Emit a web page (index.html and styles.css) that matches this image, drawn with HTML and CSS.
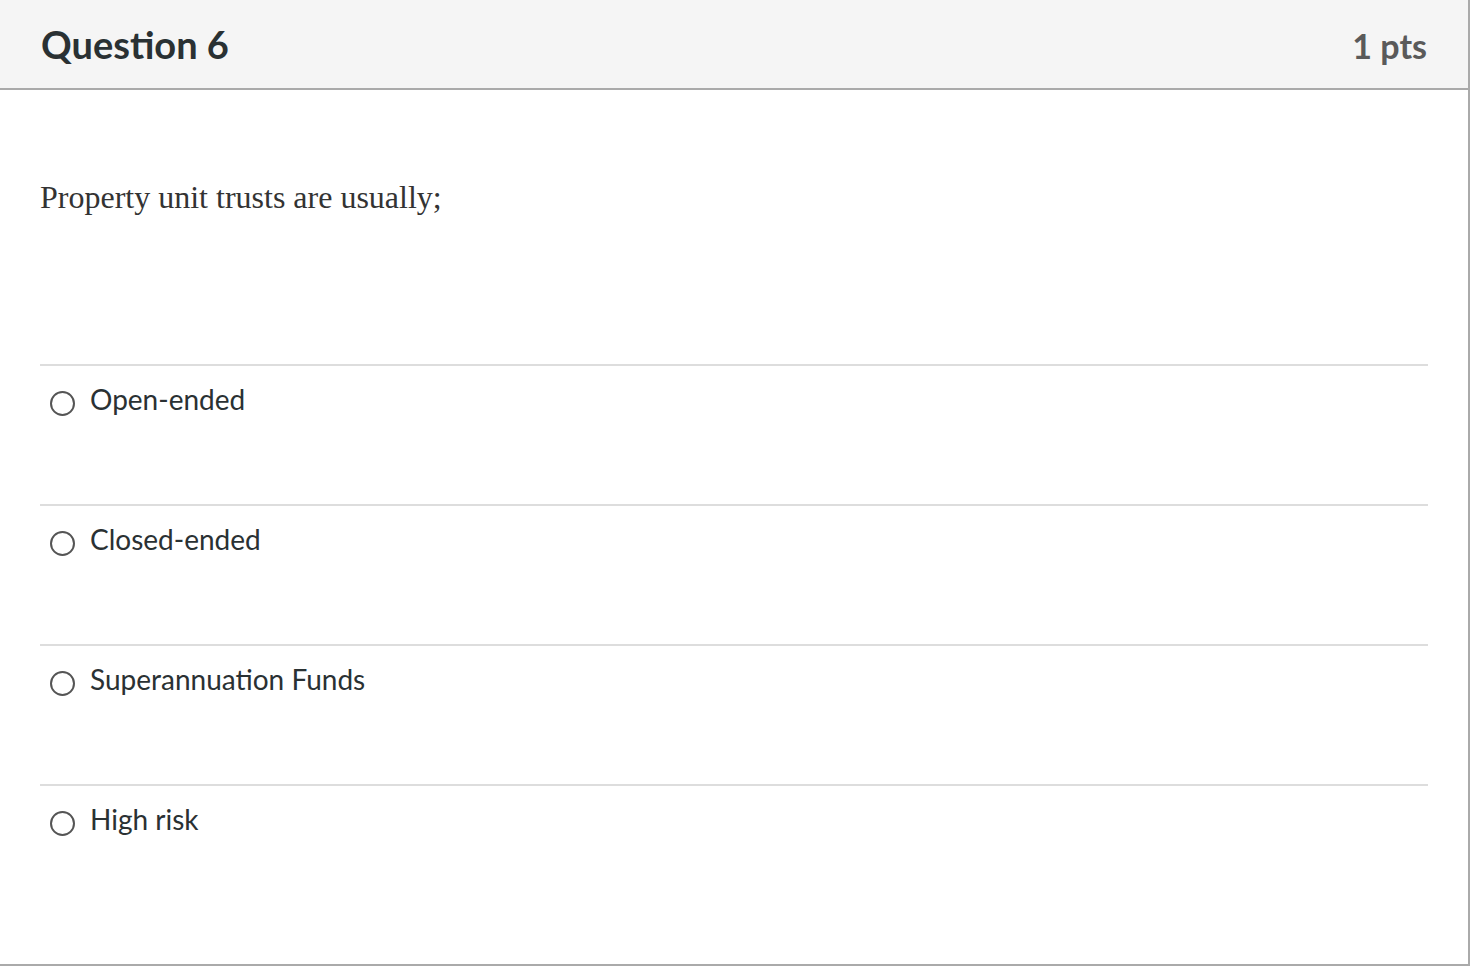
FILE: index.html
```html
<!DOCTYPE html>
<html lang="en">
<head>
<meta charset="utf-8">
<title>Question 6</title>
<link rel="stylesheet" href="styles.css">
</head>
<body>
<div class="card">
  <div class="header">
    <span class="title">Question 6</span>
    <span class="points">1 pts</span>
  </div>
  <div class="content">
    <p class="question-text">Property unit trusts are usually;</p>
    <div class="answers">
      <label class="answer"><span class="radio"></span><span class="answer-text">Open-ended</span></label>
      <label class="answer"><span class="radio"></span><span class="answer-text">Closed-ended</span></label>
      <label class="answer"><span class="radio"></span><span class="answer-text">Superannuation Funds</span></label>
      <label class="answer"><span class="radio"></span><span class="answer-text">High risk</span></label>
    </div>
  </div>
</div>
</body>
</html>
```

FILE: styles.css
```css
html, body {
  margin: 0;
  padding: 0;
  background: #ffffff;
}

body {
  font-family: Lato, "Noto Sans", sans-serif;
  color: #2d3b45;
}

.card {
  width: 1468px;
  height: 964px;
  border-right: 2px solid #aaaaaa;
  border-bottom: 2px solid #aaaaaa;
  display: flex;
  flex-direction: column;
}

.header {
  height: 88px;
  background: #f5f5f5;
  border-bottom: 2px solid #aaaaaa;
  display: flex;
  align-items: baseline;
  justify-content: space-between;
  padding: 0 41px 0 41px;
  line-height: 88px;
}

.title {
  font-size: 38px;
  font-weight: 700;
  color: #2a3133;
}

.points {
  font-size: 34px;
  font-weight: 700;
  color: #5a5a5a;
}

.content {
  padding: 89px 40px 0 40px;
  flex: 1;
  display: flex;
  flex-direction: column;
}

.question-text {
  margin: 0 0 149px 0;
  font-family: "Liberation Serif", "Times New Roman", serif;
  font-size: 32px;
  line-height: 36px;
  color: #333333;
}

.answers {
  display: flex;
  flex-direction: column;
}

.answer {
  display: flex;
  align-items: flex-start;
  height: 138px;
  border-top: 2px solid #dddddd;
  padding-left: 10px;
}

.answer:last-child {
  height: 178px;
}

.radio {
  width: 21px;
  height: 21px;
  border: 2px solid #555555;
  border-radius: 50%;
  margin-top: 25px;
  margin-right: 15px;
  flex: none;
}

.answer-text {
  font-size: 28px;
  line-height: 34px;
  padding-top: 16px;
  color: #2a3133;
}
```
